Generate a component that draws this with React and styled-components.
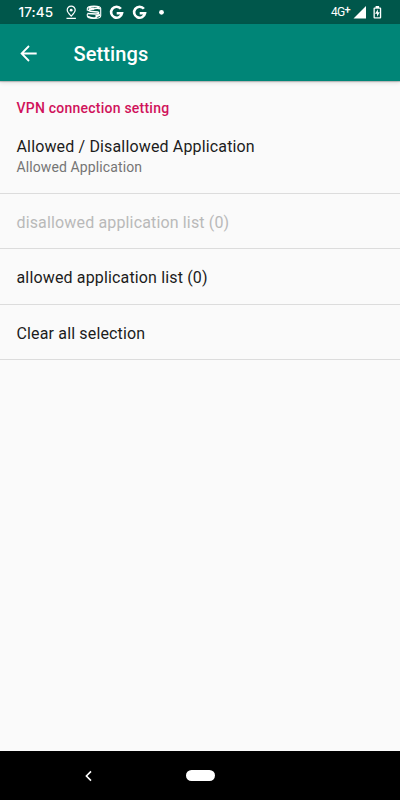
import React from "react";
import styled, { createGlobalStyle } from "styled-components";

const GlobalStyle = createGlobalStyle`
  * { box-sizing: border-box; }
  html, body { margin: 0; padding: 0; }
  body { font-family: Roboto, sans-serif; background: #fafafa; }
  svg { display: block; flex: none; }
`;

const Screen = styled.div`
  display: flex;
  flex-direction: column;
  width: 400px;
  height: 800px;
  overflow: hidden;
  background: #fafafa;
`;

const StatusBar = styled.header`
  display: flex;
  align-items: center;
  justify-content: space-between;
  flex: none;
  height: 24px;
  padding: 0 17px 0 18px;
  background: #00574b;
  color: #fff;
`;

const StatusGroup = styled.div`
  display: flex;
  align-items: center;
  height: 24px;
`;

const Clock = styled.span`
  width: 46px;
  font: 500 13.5px/24px Inter, sans-serif;
  letter-spacing: 0.12px;
  padding-left: 0.5px;
`;

const Notifications = styled.div`
  display: flex;
  align-items: center;
  gap: 7px;
`;

const Network = styled.span`
  display: flex;
  width: 22px;
  font: 400 12px/25px Roboto, sans-serif;
  letter-spacing: -0.7px;
  white-space: nowrap;
`;

const NetworkPlus = styled.span`
  font-size: 11px;
  font-weight: 500;
  line-height: 20px;
`;

const AppBar = styled.div`
  display: flex;
  align-items: center;
  flex: none;
  height: 57px;
  padding: 2px 20px 0;
  background: #008577;
  color: #fff;
  box-shadow: 0 1px 1px rgba(0, 0, 0, 0.2), 0 2px 4px rgba(0, 0, 0, 0.1);
`;

const Title = styled.h1`
  margin: 1px 0 0 35.5px;
  font-size: 20px;
  line-height: 28px;
  font-weight: 500;
  letter-spacing: 0.1px;
`;

const Content = styled.main`
  flex: 1;
  padding-top: 17px;
`;

const Category = styled.h2`
  margin: 0;
  padding: 0 16.5px;
  color: #d0125b;
  font-size: 14px;
  line-height: 20px;
  font-weight: 500;
  letter-spacing: 0.23px;
`;

const Preference = styled.div`
  display: flex;
  flex-direction: column;
  justify-content: center;
  height: ${(p) => p.$height}px;
  padding: ${(p) => p.$top || 3}px 16.5px 0;
  border-bottom: 1px solid #dcdcdc;
  color: ${(p) => (p.$disabled ? "#b9b9b9" : "#1c1c1c")};
`;

const Label = styled.span`
  font-size: 16px;
  line-height: 22px;
  letter-spacing: 0.15px;
`;

const Summary = styled.span`
  color: #757575;
  font-size: 14px;
  line-height: 19px;
  letter-spacing: 0.11px;
`;

const NavigationBar = styled.nav`
  display: flex;
  align-items: center;
  flex: none;
  height: 49px;
  padding-left: 83px;
  background: #000;
`;

const HomePill = styled.div`
  width: 29px;
  height: 11px;
  margin-left: 91px;
  border-radius: 6px;
  background: #fff;
`;

const PinIcon = () => (
  <svg width="15" height="16" viewBox="0 0 15 16" fill="none" stroke="#fff" strokeWidth="1.2">
    <path d="M7.2 12.2C5 9.9 3.2 8.2 3.2 6.1a4 4 0 0 1 8 0c0 2.1-1.8 3.8-4 6.1ZM2.5 14.4h9.4" />
    <circle cx="7.2" cy="6.2" r="1.4" fill="#fff" stroke="none" />
  </svg>
);

const DiscIcon = () => (
  <svg width="16" height="16" viewBox="0 0 16 16" fill="none" stroke="#fff">
    <path d="M1.3 4.6C1.3 1.3 14.7 1.3 14.7 4.6M1.3 4.6v2.2M14.7 4.6v7.4c0 3.3-13.4 3.3-13.4 0V10" strokeWidth="1.1" />
    <path d="M2 6.2c3 2.3 6.5 1.1 9.7 1.7 2 .8.8 2.2-2 2.1L1.3 9.6" strokeWidth="1.5" />
    <path d="M2.4 4.3c2.8-2 7.5-1.8 10.8-.5M6.5 5.3c2.4-1 5-1.2 7.5-.6M2 12.4c2.6 1.7 6.1 1.9 8.8.9" strokeWidth="1.4" />
    <path d="M9.5 12.5 14 10.8M3 5.5l5-1" strokeWidth="2.2" />
  </svg>
);

const GoogleIcon = () => (
  <svg width="16" height="16" viewBox="0 0 16 16" fill="none" stroke="#fff" strokeWidth="2.6">
    <path d="M11.9 4.8A5.5 5.5 0 1 0 13 9.2H7.7" />
  </svg>
);

const DotIcon = () => (
  <svg width="14" height="14" viewBox="0 0 14 14">
    <circle cx="6.5" cy="7.3" r="2.4" fill="#fff" />
  </svg>
);

const SignalIcon = () => (
  <svg width="14" height="14" viewBox="0 0 14 14">
    <path d="M13 1v12.5H.5Z" fill="#fff" />
  </svg>
);

const BatteryIcon = () => (
  <svg width="11" height="15" viewBox="0 0 11 15">
    <path d="M3.6 1h3.5v1.4h1.1q1 0 1 1v9.2q0 1-1 1H2.5q-1 0-1-1V3.4q0-1 1-1h1.1Z" fill="#fff" />
    <path d="M2.8 3.7h5.1v8.6H2.8Z" fill="#00574b" />
    <path d="M5.9 4.2 3 8.7h2v3.1l2.8-4.5H5.9Z" fill="#fff" />
  </svg>
);

const SignalGroup = styled(StatusGroup)`
  & svg + svg { margin-left: 5px; }
`;

const BackArrow = () => (
  <svg width="18" height="18" viewBox="0 0 18 18" fill="none" stroke="#fff" strokeWidth="1.8">
    <path d="M16.7 8.5H2M9 1 1.6 8.5 9 16" />
  </svg>
);

const NavBackIcon = () => (
  <svg width="12" height="14" viewBox="0 0 12 14" fill="none" stroke="#fff" strokeWidth="1.6">
    <path d="M8 2.4 3.4 7 8 11.6" />
  </svg>
);

export default function App() {
  return (
    <>
      <GlobalStyle />
      <Screen>
        <StatusBar>
          <StatusGroup>
            <Clock>17:45</Clock>
            <Notifications>
              <PinIcon />
              <DiscIcon />
              <GoogleIcon />
              <GoogleIcon />
              <DotIcon />
            </Notifications>
          </StatusGroup>
          <SignalGroup>
            <Network>
              4G<NetworkPlus>+</NetworkPlus>
            </Network>
            <SignalIcon />
            <BatteryIcon />
          </SignalGroup>
        </StatusBar>
        <AppBar>
          <BackArrow />
          <Title>Settings</Title>
        </AppBar>
        <Content>
          <Category>VPN connection setting</Category>
          <Preference $height={76} $top={1}>
            <Label>Allowed / Disallowed Application</Label>
            <Summary>Allowed Application</Summary>
          </Preference>
          <Preference $height={55} $disabled>
            <Label>disallowed application list (0)</Label>
          </Preference>
          <Preference $height={56} $top={2}>
            <Label>allowed application list (0)</Label>
          </Preference>
          <Preference $height={55}>
            <Label>Clear all selection</Label>
          </Preference>
        </Content>
        <NavigationBar>
          <NavBackIcon />
          <HomePill />
        </NavigationBar>
      </Screen>
    </>
  );
}
